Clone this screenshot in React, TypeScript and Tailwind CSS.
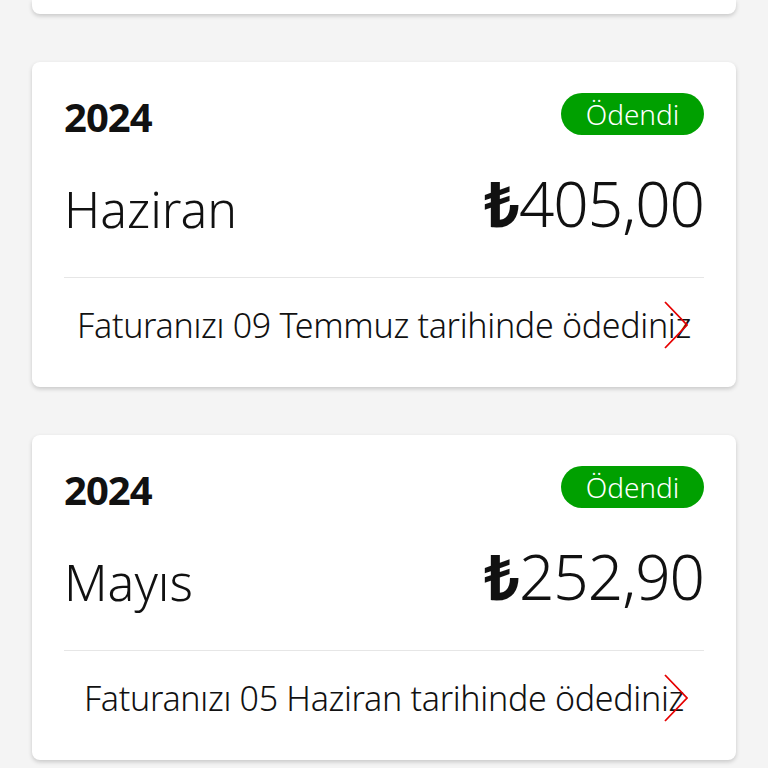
import React from "react";

const cards = [
  { year: "2024", month: "Haziran", amount: "405,00", text: "Faturanızı 09 Temmuz tarihinde ödediniz" },
  { year: "2024", month: "Mayıs", amount: "252,90", text: "Faturanızı 05 Haziran tarihinde ödediniz" },
];

function Chevron() {
  return (
    <svg width="28" height="48" viewBox="0 0 28 48" className="absolute right-[14px] top-1/2 -translate-y-1/2" fill="none">
      <path d="M3 1 L25 24 L3 47" stroke="#e60000" strokeWidth="1.8" strokeLinejoin="miter" />
    </svg>
  );
}

function Card({ year, month, amount, text }: { year: string; month: string; amount: string; text: string }) {
  return (
    <div className="bg-white rounded-lg shadow-[0_2px_4px_rgba(0,0,0,0.18)] px-[32px] pt-[31px]">
      <div className="flex items-center justify-between h-[42px]">
        <span className="text-[40px] font-bold text-[#111] tracking-[-1px] leading-none mt-[6px]">{year}</span>
        <span className="bg-[#00a000] text-white rounded-full h-[42px] w-[143px] flex items-center justify-center text-[28px] leading-none font-light">Ödendi</span>
      </div>
      <div className="flex items-end justify-between mt-[29px] h-[70px]">
        <span className="text-[50px] font-light leading-none text-[#111]">{month}</span>
        <span className="text-[62px] font-light leading-none text-[#111] tracking-[-1px]">
          <span className="font-bold">₺</span>{amount}
        </span>
      </div>
      <div className="h-px bg-[#e6e6e6] mt-[43px]" />
      <div className="h-[109px] pb-[16px] flex flex-col justify-center">
        <div className="relative flex items-center justify-center h-[48px]">
          <span className="text-[34px] font-light text-[#111] leading-none tracking-[-0.3px]">{text}</span>
          <Chevron />
        </div>
      </div>
    </div>
  );
}

export default function App() {
  return (
    <div className="min-h-[768px] bg-[#f4f4f4] px-[32px] overflow-hidden" style={{ fontFamily: '"Noto Sans", "Open Sans", sans-serif' }}>
      <div className="h-[14px] bg-white rounded-b-lg shadow-[0_2px_4px_rgba(0,0,0,0.18)]" />
      <div className="flex flex-col gap-[48px] mt-[48px]">
        {cards.map((c) => (
          <Card key={c.month} {...c} />
        ))}
      </div>
    </div>
  );
}
